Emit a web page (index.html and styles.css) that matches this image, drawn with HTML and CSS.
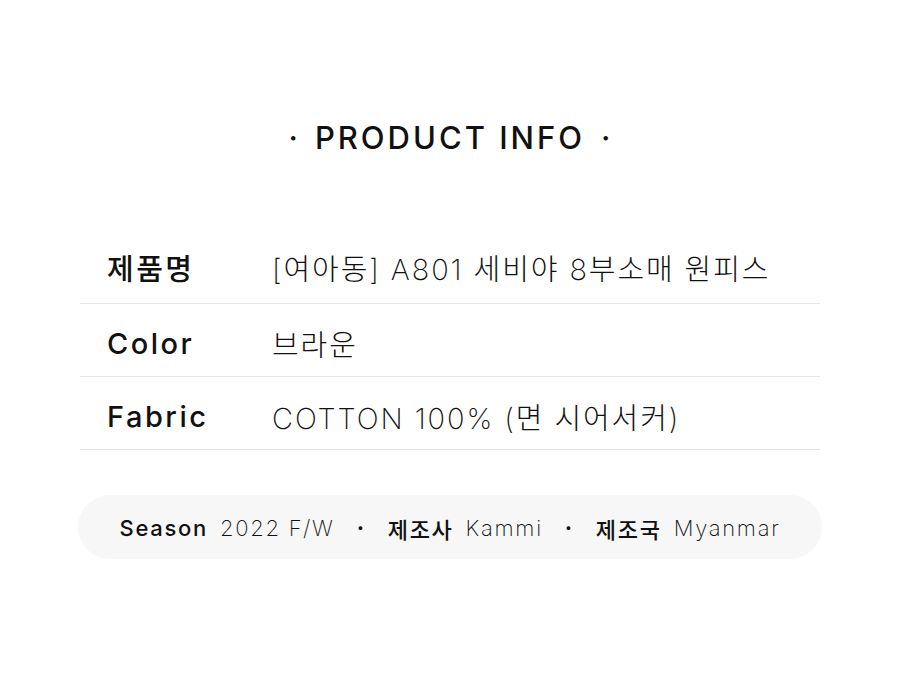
FILE: index.html
```html
<!DOCTYPE html>
<html lang="ko">
<head>
<meta charset="utf-8">
<link rel="stylesheet" href="styles.css">
</head>
<body>
<main class="page">
  <h1 class="title"><span class="dot">·</span>PRODUCT INFO<span class="dot">·</span></h1>
  <div class="table">
    <div class="row"><div class="label">제품명</div><div class="value">[여아동] A801 세비야 8부소매 원피스</div></div>
    <div class="row"><div class="label">Color</div><div class="value">브라운</div></div>
    <div class="row"><div class="label">Fabric</div><div class="value">COTTON 100% (면 시어서커)</div></div>
  </div>
  <div class="pill">
    <span class="k">Season</span><span class="v">2022 F/W</span>
    <span class="sep">·</span>
    <span class="k">제조사</span><span class="v">Kammi</span>
    <span class="sep">·</span>
    <span class="k">제조국</span><span class="v">Myanmar</span>
  </div>
</main>
</body>
</html>
```
FILE: styles.css
```css
* { box-sizing: border-box; }
html, body { margin: 0; padding: 0; background: #fff; }
body {
  font-family: "Inter", "Noto Sans CJK KR", sans-serif;
  color: #111;
  width: 900px;
  height: 683px;
}
.page {
  padding: 112px 78px 0 78px;
}
.title {
  margin: 0;
  text-align: center;
  font-size: 31px;
  font-weight: 500;
  line-height: 52px;
  letter-spacing: 3px;
  color: #111;
}
.title .dot { margin: 0 14px 0 16px; }
.table {
  margin: 70px 2px 0 2px;
}
.row {
  display: flex;
  align-items: center;
  height: 73px;
  padding-top: 6px;
  border-bottom: 1px solid #e6e6e6;
}
.row:first-child { height: 70px; padding-top: 0; padding-bottom: 3px; }
.label {
  width: 192px;
  padding-left: 27px;
  font-size: 29px;
  font-weight: 450;
  letter-spacing: 2.5px;
  color: #111;
}
.value {
  font-size: 29px;
  font-weight: 200;
  letter-spacing: 1.9px;
  color: #111;
}
.pill {
  margin-top: 45px;
  height: 64px;
  border-radius: 32px;
  background: #f7f7f7;
  display: flex;
  align-items: center;
  justify-content: center;
  font-size: 22px;
  padding-top: 2px;
  letter-spacing: 1.7px;
}
.pill .k { font-weight: 550; margin-right: 12px; color: #111; }
.pill .v { font-weight: 200; color: #111; }
.pill .sep { margin: 0 22px; font-weight: 700; }
```
